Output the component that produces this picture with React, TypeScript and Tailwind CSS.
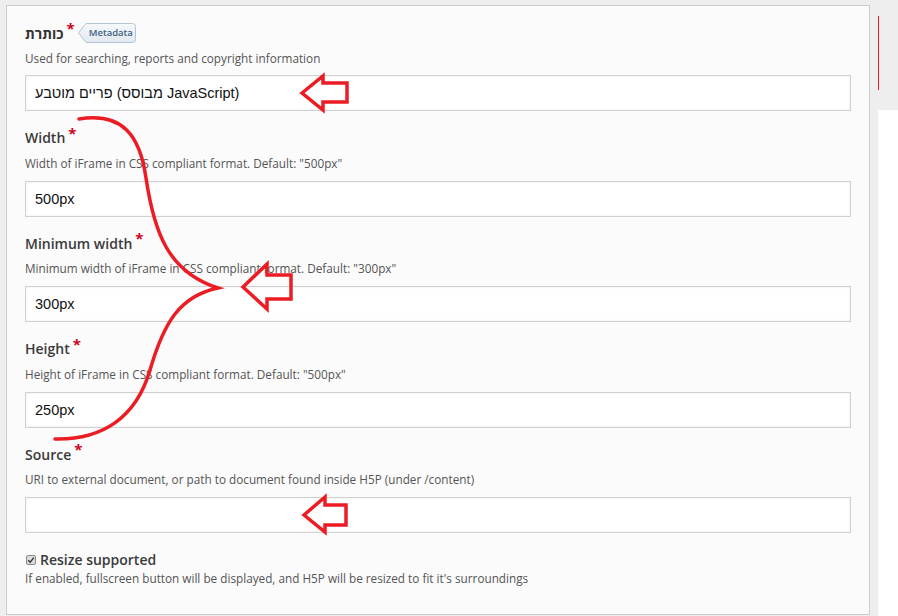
import React from 'react';

const fields = [
  {
    label: 'Width',
    description: 'Width of iFrame in CSS compliant format. Default: "500px"',
    value: '500px',
  },
  {
    label: 'Minimum width',
    description: 'Minimum width of iFrame in CSS compliant format. Default: "300px"',
    value: '300px',
  },
  {
    label: 'Height',
    description: 'Height of iFrame in CSS compliant format. Default: "500px"',
    value: '250px',
  },
  {
    label: 'Source',
    description: 'URI to external document, or path to document found inside H5P (under /content)',
    value: '',
  },
];

const MetadataButton = () => (
  <span className="relative ml-[3px] inline-flex h-5 w-[58px] items-center">
    <svg className="absolute inset-0" width="58" height="20" viewBox="0 0 58 20">
      <defs>
        <linearGradient id="meta" x1="0" y1="0" x2="0" y2="1">
          <stop offset="0" stopColor="#f6f9fc" />
          <stop offset="1" stopColor="#e1e8ef" />
        </linearGradient>
      </defs>
      <path
        d="M0.5,10 L8,0.5 H54.5 Q57.5,0.5 57.5,3.5 V16.5 Q57.5,19.5 54.5,19.5 H8 Z"
        fill="url(#meta)"
        stroke="#b4c4d4"
      />
    </svg>
    <span className="relative pl-[11px] text-[9.5px] font-semibold text-[#3f6183]">Metadata</span>
  </span>
);

const Required = () => (
  <span className="ml-[3px] -mt-[9px] text-[15px] font-bold leading-none text-[#d0021b]">*</span>
);

const TextField = ({ value }: { value: string }) => (
  <input
    readOnly
    value={value}
    dir="ltr"
    className="h-9 w-full border border-[#d0d0d0] bg-white pl-[9px] font-['Liberation_Sans',Arial,sans-serif] text-[14.5px] text-[#111] shadow-[inset_0_0_3px_rgba(0,0,0,0.08)] outline-none"
  />
);

export default function App() {
  return (
    <div className="relative flex h-[616px] w-[898px] overflow-hidden bg-[#eeeeee] font-['Open_Sans','Liberation_Sans',sans-serif]">
      <div className="ml-[6px] mt-[5px] h-[610px] w-[864px] border border-[#cccccc] bg-[#fbfbfb] px-[18px] pt-[17px]">
        {/* title */}
        <div className="mb-[16.5px] flex flex-col">
          <div className="flex h-5 items-center">
            <span className="text-[14px] font-bold text-[#333]">כותרת</span>
            <Required />
            <MetadataButton />
          </div>
          <div className="mt-[7px] h-4 text-[11.75px] leading-4 text-[#555]">
            Used for searching, reports and copyright information
          </div>
          <div className="mt-[9px]">
            <TextField value="פריים מוטבע (מבוסס JavaScript)" />
          </div>
        </div>

        {fields.map((f) => (
          <div key={f.label} className="mb-[16.5px] flex flex-col">
            <div className="flex h-5 items-center">
              <span className="text-[14px] font-semibold text-[#3a3a3a]">{f.label}</span>
              <Required />
            </div>
            <div className="mt-[7px] h-4 text-[11.75px] leading-4 text-[#555]">{f.description}</div>
            <div className="mt-[10px]">
              <TextField value={f.value} />
            </div>
          </div>
        ))}

        {/* resize checkbox */}
        <div className="mt-[2px] flex flex-col">
          <div className="flex h-5 items-center">
            <span className="ml-px flex h-[10px] w-[10px] items-center justify-center rounded-[2px] border border-[#8a8a8a] bg-[#dcdcdc]">
              <svg width="8" height="8" viewBox="0 0 8 8">
                <path d="M1.2,4.2 L3.2,6.2 L6.8,1.6" fill="none" stroke="#333" strokeWidth="1.4" />
              </svg>
            </span>
            <span className="ml-[4px] text-[14px] font-semibold text-[#3a3a3a]">Resize supported</span>
          </div>
          <div className="h-4 text-[11.75px] leading-4 text-[#555]">
            If enabled, fullscreen button will be displayed, and H5P will be resized to fit it's surroundings
          </div>
        </div>
      </div>

      <div className="ml-[8px] flex flex-1 flex-col">
        <div className="mt-[16px] h-[74px] w-px bg-[#ee1c24]" />
        <div className="mt-[20px] flex-1 bg-white" />
      </div>

      {/* red annotations drawn over the screenshot */}
      <svg className="pointer-events-none absolute inset-0" width="898" height="616" viewBox="0 0 898 616">
        <g fill="none" stroke="#ec1c24" strokeWidth="3.5" strokeLinejoin="miter">
          <path d="M302,93 L323,76 L323,83 L347,83 L347,102 L323,102 L323,110 Z" />
          <path d="M243,287 L267,264 L267,275 L291,275 L291,299 L267,299 L267,309 Z" />
          <path d="M304,515 L325,497 L325,505 L346,505 L346,525 L325,525 L325,532 Z" />
          <path
            d="M79,119 C122,112 140,135 146,178 C154,232 168,272 218,288 C180,296 164,322 150,370 C136,418 102,440 55,439"
            strokeLinecap="round"
          />
        </g>
      </svg>
    </div>
  );
}
